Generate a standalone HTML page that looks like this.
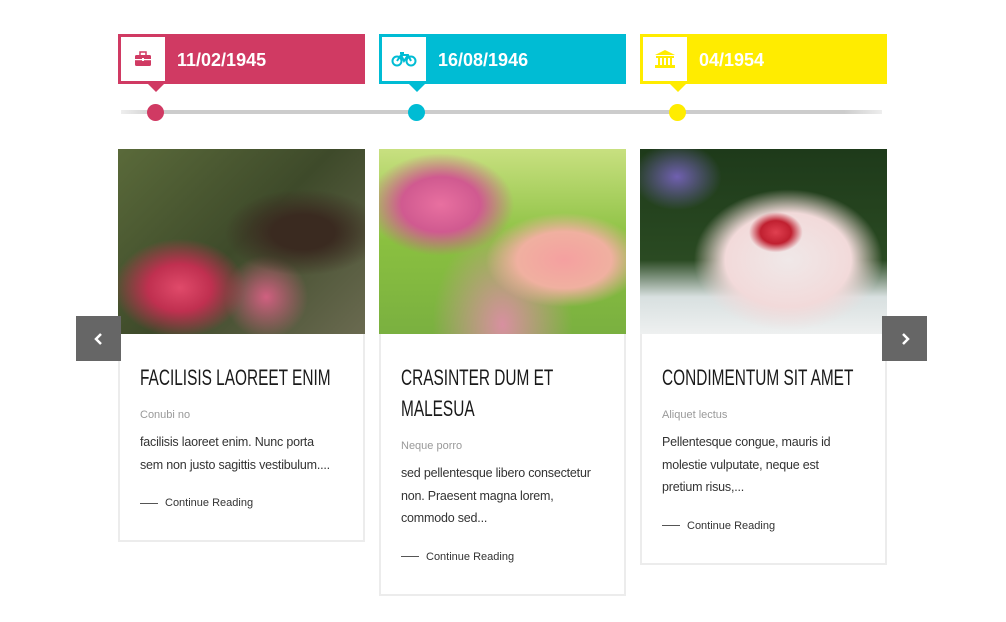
<!DOCTYPE html>
<html><head><style>
*{margin:0;padding:0;box-sizing:border-box}
body{width:1006px;height:622px;background:#fff;position:relative;overflow:hidden;font-family:"Liberation Sans",sans-serif}
.tl{position:absolute;top:34px;width:247px;height:50px;}
.tl .ic{position:absolute;left:3px;top:3px;width:44px;height:44px;background:#fff;display:flex;align-items:center;justify-content:center}
.tl .d{position:absolute;left:59px;top:1px;line-height:50px;color:#fff;font-weight:bold;font-size:18px}
.tl .tri{position:absolute;left:30px;top:50px;width:0;height:0;border-left:8px solid transparent;border-right:8px solid transparent;border-top:8px solid}
.line{position:absolute;left:121px;top:110px;width:761px;height:4px;background:linear-gradient(90deg,#eee,#ccc 5%,#ccc 95%,#eee)}
.dot{position:absolute;top:104px;width:17px;height:17px;border-radius:50%}
.card{position:absolute;top:149px;width:247px;border:2px solid #ececec;border-top:none;background:#fff}
.img{height:185px;margin:0 -2px}
.body{padding:28px 20px 31px 20px}
h2{font-weight:normal;font-size:22px;line-height:31px;color:#1a1a1a;white-space:nowrap;transform:scaleX(.7);transform-origin:left}
.sub{font-size:11px;color:#999;margin-top:16px}
p{font-size:12.5px;color:#333;line-height:22.5px;margin-top:10px;white-space:nowrap;letter-spacing:-0.2px}
.cr{font-size:11px;color:#333;margin-top:21px;display:flex;align-items:center}
.cr:before{content:"";width:18px;height:1px;background:#555;margin-right:7px}
.arr{position:absolute;top:316px;width:45px;height:45px;background:#666;color:#fff;display:flex;align-items:center;justify-content:center}
</style></head><body>
<div class="tl" style="left:118px;background:#d03a63"><div class="ic"><svg width="18" height="16" viewBox="0 0 18 16"><rect x="1" y="4" width="16" height="11" rx="1.5" fill="#d03a63"/><rect x="6" y="1" width="6" height="4" fill="none" stroke="#d03a63" stroke-width="1.5"/><rect x="1" y="8" width="16" height="1.2" fill="#fff"/><rect x="8" y="7" width="2" height="3" fill="#fff"/></svg></div><div class="d">11/02/1945</div><div class="tri" style="border-top-color:#d03a63"></div></div>
<div class="tl" style="left:379px;background:#00bcd4"><div class="ic"><svg width="26" height="16" viewBox="0 0 26 16" fill="none" stroke="#00bcd4" stroke-width="2"><circle cx="6" cy="10" r="4.5"/><circle cx="20" cy="10" r="4.5"/><path d="M6 10 L10 4 L17 4 L20 10 M10 4 L13 10 L17 4 M9 2h4"/></svg></div><div class="d">16/08/1946</div><div class="tri" style="border-top-color:#00bcd4"></div></div>
<div class="tl" style="left:640px;background:#ffec00"><div class="ic"><svg width="22" height="20" viewBox="0 0 22 20" fill="#ffec00"><path d="M11 1 L21 6 L1 6Z"/><rect x="2" y="7" width="18" height="2"/><rect x="4" y="9" width="2" height="7"/><rect x="8" y="9" width="2" height="7"/><rect x="12" y="9" width="2" height="7"/><rect x="16" y="9" width="2" height="7"/><rect x="1" y="16" width="20" height="3"/></svg></div><div class="d">04/1954</div><div class="tri" style="border-top-color:#ffec00"></div></div>
<div class="line"></div>
<div class="dot" style="left:147px;background:#d03a63"></div>
<div class="dot" style="left:408px;background:#00bcd4"></div>
<div class="dot" style="left:669px;background:#ffec00"></div>

<div class="card" style="left:118px"><div class="img" style="background:radial-gradient(ellipse at 75% 45%,#3a2a20 0,#3a2a20 12%,transparent 30%),radial-gradient(ellipse at 25% 75%,#e04a6a 0,#c03050 12%,transparent 25%),radial-gradient(ellipse at 60% 80%,#d06080 0,transparent 20%),linear-gradient(135deg,#5a6a3a,#3e4a2a 50%,#6a6a50)"></div><div class="body"><h2>FACILISIS LAOREET ENIM</h2><div class="sub">Conubi no</div><p>facilisis laoreet enim. Nunc porta<br>sem non justo sagittis vestibulum....</p><div class="cr">Continue Reading</div></div></div>
<div class="card" style="left:379px"><div class="img" style="background:radial-gradient(ellipse at 25% 30%,#e870a0 0,#d05a90 15%,transparent 28%),radial-gradient(ellipse at 75% 60%,#f5a0a0 0,#f0b0a0 18%,transparent 30%),radial-gradient(ellipse at 50% 95%,#d890a0 0,transparent 40%),linear-gradient(180deg,#c8e080,#8ac040 50%,#7ab040)"></div><div class="body"><h2>CRASINTER DUM ET<br>MALESUA</h2><div class="sub">Neque porro</div><p>sed pellentesque libero consectetur<br>non. Praesent magna lorem,<br>commodo sed...</p><div class="cr">Continue Reading</div></div></div>
<div class="card" style="left:640px"><div class="img" style="background:radial-gradient(ellipse at 55% 45%,#e04050 0,#c02030 8%,transparent 14%),radial-gradient(ellipse at 60% 60%,#f0e8e8 0,#f2dada 30%,transparent 45%),radial-gradient(ellipse at 15% 15%,#7060b0 0,transparent 15%),linear-gradient(180deg,#1e3a1a,#2a4a22 60%,#d8e0e0 80%,#eef0f0)"></div><div class="body"><h2>CONDIMENTUM SIT AMET</h2><div class="sub">Aliquet lectus</div><p>Pellentesque congue, mauris id<br>molestie vulputate, neque est<br>pretium risus,...</p><div class="cr">Continue Reading</div></div></div>

<div class="arr" style="left:76px"><svg width="10" height="14"><path d="M7 2 L2 7 L7 12" stroke="#fff" stroke-width="2.5" fill="none"/></svg></div>
<div class="arr" style="left:882px"><svg width="10" height="14"><path d="M3 2 L8 7 L3 12" stroke="#fff" stroke-width="2.5" fill="none"/></svg></div>
</body></html>
